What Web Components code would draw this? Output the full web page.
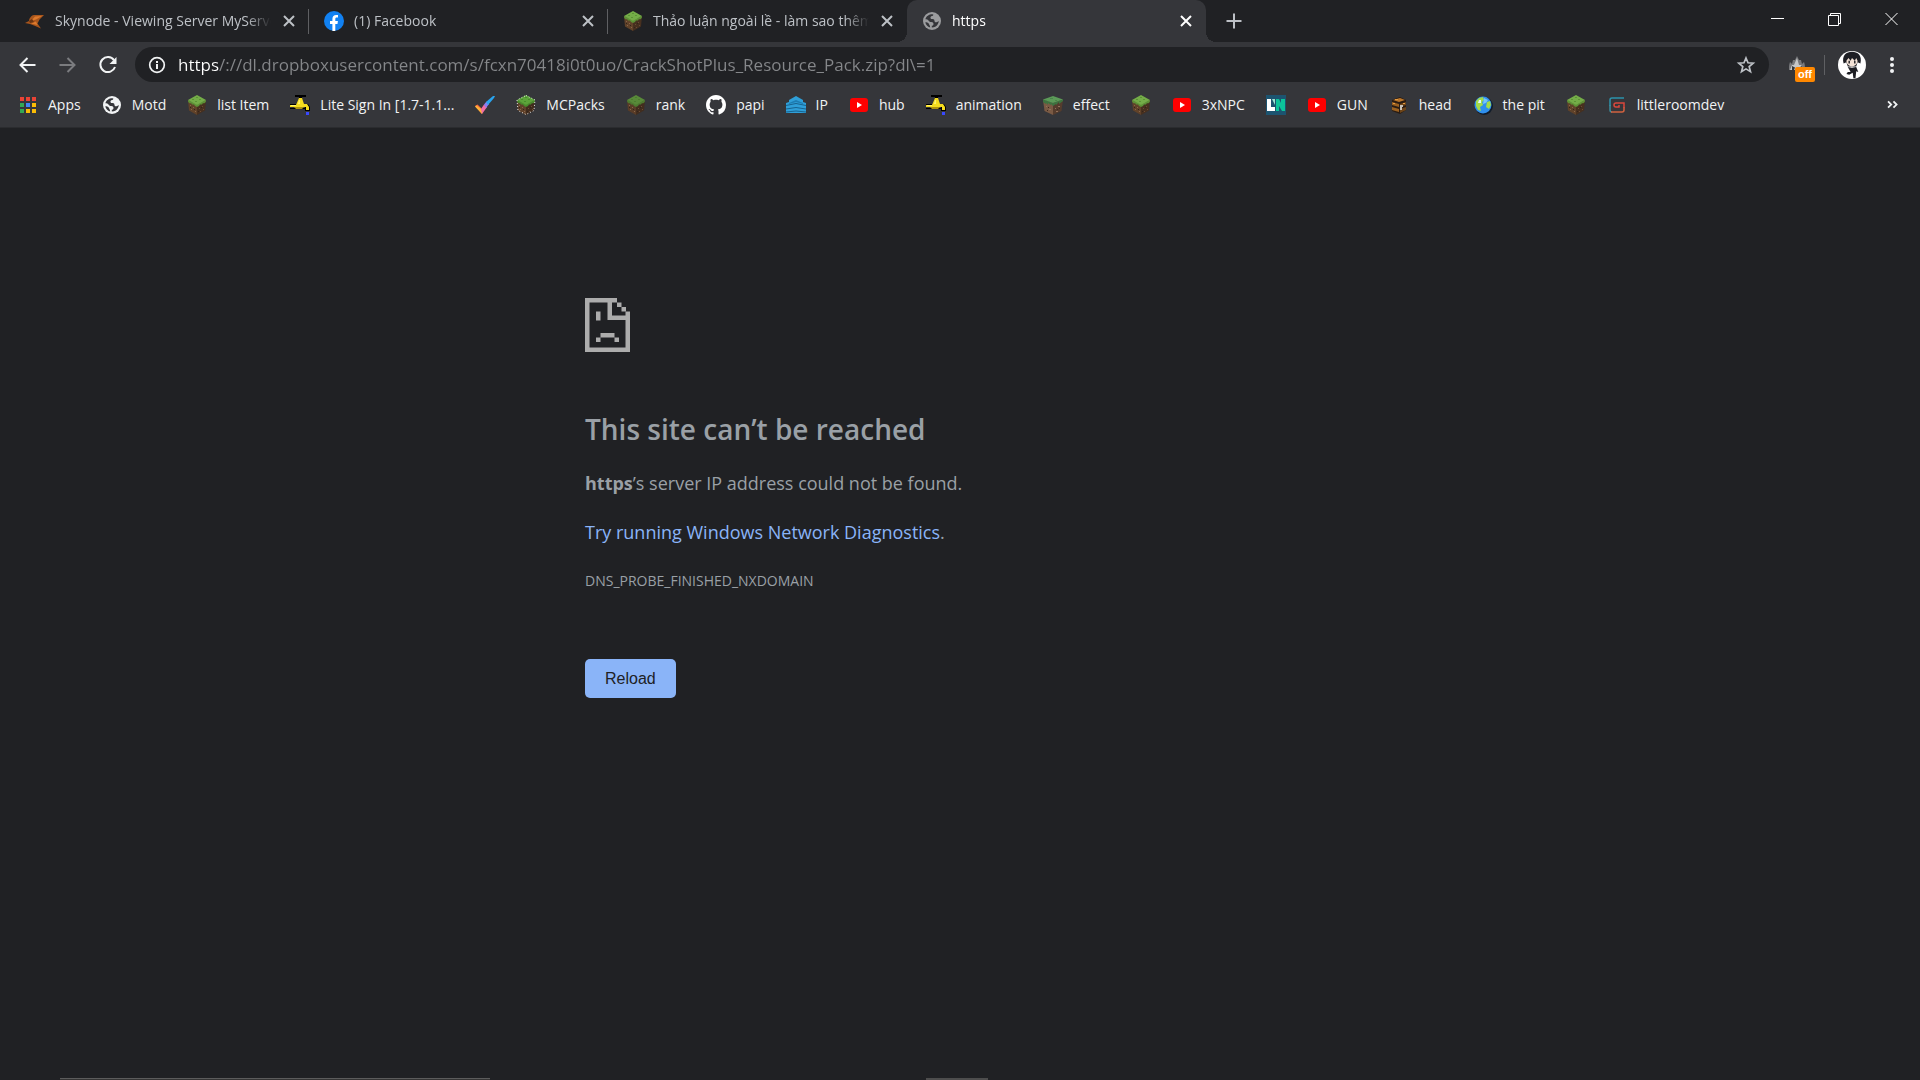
<!DOCTYPE html>
<html lang="en">
<head>
<meta charset="utf-8">
<meta name="viewport" content="width=device-width, initial-scale=1">
<title>https</title>
<style>
    body {
        margin: 0;
        min-height: 100vh;
        display: flex;
        flex-direction: column;
        background: #202124;
        color: #9aa0a6;
        font-family: "Open Sans", "Noto Sans", sans-serif;
        font-size: 14px;
        overflow-x: hidden
    }
    error-page {
        flex: 1
    }
</style>
</head>
<body>
    <tab-strip>
        <browser-tab icon="skynode">Skynode - Viewing Server MyServer</browser-tab>
        <browser-tab icon="facebook">(1) Facebook</browser-tab>
        <browser-tab icon="grass">Thảo luận ngoài lề - làm sao thêm</browser-tab>
        <browser-tab icon="globe" active>https</browser-tab>
    </tab-strip>
    <tool-bar url="https/://dl.dropboxusercontent.com/s/fcxn70418i0t0uo/CrackShotPlus_Resource_Pack.zip?dl\=1"></tool-bar>
    <bookmark-bar>
        <bookmark-item icon="apps">Apps</bookmark-item>
        <bookmark-item icon="globe">Motd</bookmark-item>
        <bookmark-item icon="grass">list Item</bookmark-item>
        <bookmark-item icon="tap">Lite Sign In [1.7-1.1...</bookmark-item>
        <bookmark-item icon="check" title="Tasks"></bookmark-item>
        <bookmark-item icon="mcpacks">MCPacks</bookmark-item>
        <bookmark-item icon="grassdark">rank</bookmark-item>
        <bookmark-item icon="github">papi</bookmark-item>
        <bookmark-item icon="tower">IP</bookmark-item>
        <bookmark-item icon="youtube">hub</bookmark-item>
        <bookmark-item icon="tap">animation</bookmark-item>
        <bookmark-item icon="block">effect</bookmark-item>
        <bookmark-item icon="grass" title="Minecraft"></bookmark-item>
        <bookmark-item icon="youtube">3xNPC</bookmark-item>
        <bookmark-item icon="ln" title="Novels"></bookmark-item>
        <bookmark-item icon="youtube">GUN</bookmark-item>
        <bookmark-item icon="crate">head</bookmark-item>
        <bookmark-item icon="earth">the pit</bookmark-item>
        <bookmark-item icon="grass" title="Minecraft"></bookmark-item>
        <bookmark-item icon="spiral">littleroomdev</bookmark-item>
    </bookmark-bar>
    <error-page>
        <h1 slot="title">This site can’t be reached</h1>
        <span slot="summary"><strong>https</strong>’s server IP address could not be found.</span>
        <a slot="suggestion" href="#diagnostics">Try running Windows Network Diagnostics</a>
        <span slot="code">DNS_PROBE_FINISHED_NXDOMAIN</span>
    </error-page>
    <desktop-edge></desktop-edge>

<script>
// isometric block, shared by all the grass icons
const cube = (top, top2, left, right, extra = '') => `
    <path fill="${left}" d="M1 5l9 4.500V20L2 15.500z"/>
    <path fill="${right}" d="M19 5l-9 4.500V20l8-4.500z"/>
    <path fill="${top2}" d="M1 5l9 4.500V12l-2-1-1-1.500-2 0-1-1.500-1 .5L1.200 7zM19 5l-9 4.500V12l2-1 1-1.500 2 0 1-1.500 1 .5L18.800 7z"/>
    <path fill="${top}" d="M10 0 19 5 10 10 1 5z"/>
    <path fill="${top2}" d="M9 2h2v1H9zM5 4h2v1H5zM12 4h2v1h-2zM8 6h2v1H8z"/>
    <path fill="#8a6547" d="M3 10h1v1H3zM6 12h1v1H6zM4 14h1v1H4zM8 16h1v1H8z"/>
    <path fill="#6b4b34" d="M12 13h1v1h-1zM15 11h1v1h-1zM16 14h1v1h-1zM13 16h1v1h-1z"/>
    <path fill="#33231a" d="M3 12h1v1H3zM7 14h1v1H7zM14 12h1v1h-1zM11 16h1v1h-1z"/>${extra}`

const ICONS = {
    apps: `
        <path fill="#ea4335" d="M2 2h4v4H2zM8 2h4v4H8zM14 2h4v4h-4z"/>
        <path fill="#34a853" d="M2 8h4v4H2zM2 14h4v4H2z"/>
        <path fill="#4285f4" d="M8 8h4v4H8z"/>
        <path fill="#fbbc05" d="M14 8h4v4h-4zM8 14h4v4H8zM14 14h4v4h-4z"/>`,
    globe: `
        <circle cx="10" cy="10" r="9" fill="currentColor"/>
        <path fill="#35363a" d="M10.500 3.200c1.500 0 .8 1.600-.4 1.900-1.400.3-1.700 1.100-1.600 1.900.1 1 1 1.100 2 1.100 1.600 0 1.900.9 2 2 .1 1.200 1 1.400 2 1.200.8-.2 1.500-.8 2.300-1.300-.1 2.200-1.300 4.300-3.100 5.500-1.200.8-2.500 1.100-3.900 1.100v-1.800c1-.2 1.700-.9 1.700-1.900 0-1.100-.8-1.900-2.200-1.900-1.700 0-2.200-.8-3-1.800-.8-.9-1.500-1.200-2.900-1C4 5.200 7 3.200 10.500 3.200z"/>
        <path fill="#35363a" d="M3.300 11.200c1.200.1 2.800.2 3.400 1.300.6 1.200 1.300 2.200 1.500 3.900-2.600-.7-4.500-2.600-4.900-5.200z"/>`,
    grass: cube('#74ad48', '#5c9136', '#604229', '#47301f'),
    grassdark: cube('#588a39', '#4c7a30', '#593c27', '#422d1e'),
    mcpacks: cube('#5ca43a', '#478b2c', '#5f412a', '#412c1d',
        '<path fill="none" stroke="#e4e4e4" stroke-width="1" stroke-dasharray="1 2" d="M10 .5l9 4.500-1 10.500-8 4-8-4L1 5z"/>'),
    block: `
        <path fill="#7a5a44" d="M0 4.500 10 8v12L1.500 16z"/>
        <path fill="#553c2d" d="M20 4.500 10 8v12l8.500-4z"/>
        <path fill="#3d7340" d="M0 4.500 10 8v3L8 9v1L5 8v2L3 8v1L0 7zM20 4.500 10 8v3l3-2v1l3-3v2l4-3z"/>
        <path fill="#5b9a58" d="M10 1 20 4.500 10 8 0 4.500z"/>
        <path fill="#4a8549" d="M7 3h3v1H7zM12 5h2v1h-2z"/>
        <path fill="#92705a" d="M3 11h1v1H3zM6 14h2v1H6zM12 13h1v1h-1zM15 11h2v1h-2zM13 16h2v1h-2z"/>
        <path fill="#3d2a20" d="M5 12h1v1H5zM4 15h1v1H4zM14 14h1v1h-1zM16 13h1v1h-1z"/>`,
    tap: `
        <path fill="#000" d="M5 0h11v2h-4v2h-3V2H5zM0 9h6v1H0zM0 13h16v1H0zM15 9h3l2 3v4h-5z"/>
        <path fill="#f5dc1e" d="M9 3h3l2 6h3l2 3v3h-3v-3H0v-2h6z"/>
        <path fill="#fff36b" d="M9 5h1v4H8zM1 10h5v1H1z"/>
        <path fill="#b09410" d="M4 12h10l-2 2H6z"/>
        <path fill="#3848ff" d="M16 17h3v3h-3z"/>`,
    check: `
        <path fill="#ff6a3e" d="M0 11l2.500-1.500L7 14v5z"/>
        <path fill="#ffb338" d="M0 11.500l1.500-1L8 15.500 7 19z"/>
        <path fill="#ef6ca5" d="M6 14l3-4.500 3 2.500-5 7z"/>
        <path fill="#8a7df0" d="M9 9.500l2.500-3L14 9l-3 4z"/>
        <path fill="#29a4ef" d="M11 7l7-6 2 0-1 2-6 7z"/>`,
    github: `<path fill="#fff" fill-rule="evenodd" transform="scale(1.250)" d="M8 0C3.580 0 0 3.580 0 8c0 3.540 2.290 6.530 5.470 7.590.4.070.55-.17.55-.38 0-.19-.01-.82-.01-1.490-2.010.37-2.530-.49-2.690-.94-.09-.23-.48-.94-.82-1.130-.28-.15-.68-.52-.01-.53.63-.01 1.080.58 1.230.82.72 1.210 1.870.87 2.330.66.07-.52.28-.87.51-1.070-1.780-.2-3.640-.89-3.640-3.950 0-.87.31-1.590.82-2.150-.08-.2-.36-1.020.08-2.120 0 0 .67-.21 2.200.82.64-.18 1.320-.27 2-.27s1.360.09 2 .27c1.530-1.040 2.200-.82 2.200-.82.44 1.100.16 1.920.08 2.120.51.56.82 1.270.82 2.150 0 3.070-1.870 3.750-3.650 3.950.29.25.54.73.54 1.480 0 1.070-.01 1.930-.01 2.200 0 .21.15.46.55.38A8.010 8.010 0 0 0 16 8c0-4.420-3.580-8-8-8z"/>`,
    tower: `
        <path fill="#2f9fd8" d="M10 1l7 4v2l3 1v10H0V8l3-1V5z"/>
        <path fill="#1d7db3" d="M10 5l7 3v1l-7-2-7 2V8z"/>
        <path fill="none" stroke="#17628f" d="M0 10.500l10-2 10 2M0 14l10-1.500L20 14M0 17l10-1 10 1"/>`,
    youtube: `
        <rect x="1" y="3" width="18" height="14" rx="3" fill="#f00"/>
        <path fill="#fff" d="M8 7l5 3-5 3z"/>`,
    ln: `
        <path fill="#1c5470" d="M0 0h20v20H0z"/>
        <path fill="#fff" d="M1 4h4v8h4v4H1z"/>
        <path fill="#0cc39a" d="M10 4h3l2 4V4h4v12h-3l-3-5v5h-3z"/>
        <path fill="#9fe3d2" d="M6 4h3v6z"/>`,
    crate: `
        <path fill="#2a1c12" d="M3 5l8-3 6 3v10l-6 4-8-3z"/>
        <path fill="#b8752a" d="M4 5l7-2 5 2-6 2z"/>
        <path fill="#9c6120" d="M3 7l7 2v3l-7-2zM3 12l7 2v3l-7-2z"/>
        <path fill="#6e4519" d="M11 9l6-2v3l-6 2zM11 14l6-2v3l-6 3z"/>
        <path fill="#c9c2b8" d="M11 10h3v2h-1v3h-2z"/>
        <path fill="#e79a3d" d="M6 4h3v1H6zM4 8h2v1H4zM14 8h2v1h-2z"/>`,
    earth: `
        <circle cx="11" cy="11" r="9" fill="#101c2b"/>
        <circle cx="10" cy="10" r="8.500" fill="#2f8fee"/>
        <path fill="#a3db4a" d="M3 6l3-3 4-1 1 3-2 2 1 3-3 2 1 4-3-1-2-4zM14 7l3-1 1 4-2 4-3-2z"/>
        <path fill="#74c4ff" d="M11 3l4 2-2 3-3 1z"/>
        <path fill="#e3f8ff" d="M6 5h2v3H5z"/>`,
    spiral: `
        <g fill="none" stroke-width="1.500">
            <path stroke="#2b93ac" d="M17 3H5Q3 3 3 5v6"/>
            <path stroke="#3c8c9c" d="M3 10v5q0 2 2 2"/>
            <path stroke="#d1623f" d="M4 17h11q2 0 2-2v-3"/>
            <path stroke="#d9473c" d="M17 13V8H9q-2 0-2 2t2 2h3v-2"/>
        </g>`,
    skynode: `
        <path fill="#a8561d" d="M19 4 9 4C6 4.500 4 8 4 10l-4 2 5 1 4 1.500 7 3-3.500-5 2-4z"/>
        <path fill="#de7a2c" d="M17 5 10 5.500l-4 4.500 5-1.500zM6 12.500l5-2 1.500 3.500z"/>
        <path fill="#6b3512" d="M4 10l3-2 2 3-4 1z"/>`,
    facebook: `
        <circle cx="10" cy="10" r="10" fill="#1181f2"/>
        <path fill="#fff" d="M8.400 20v-7H6v-3h2.400V8c0-2.700 1.500-4 3.700-4 1 0 1.900.1 1.900.1v2.400h-1.200c-1.200 0-1.500.7-1.500 1.500v2h2.600l-.4 3h-2.200v7z"/>`,
    close: '<path fill="none" stroke="currentColor" stroke-width="2" d="M5 5l10 10M15 5 5 15"/>',
    plus: '<path fill="none" stroke="currentColor" stroke-width="2" d="M10 2.500v15M2.500 10h15"/>',
    minimise: '<path stroke="#fff" d="M3 9.500h13"/>',
    restore: '<path fill="none" stroke="#fff" d="M3.500 6.500h10v10h-10zM5.500 6.500v-2h10v10h-2"/>',
    quit: '<path fill="none" stroke="#fff" d="M3.500 4l12 12M15.500 4l-12 12"/>',
    back: '<path fill="none" stroke="currentColor" stroke-width="2" d="M17.500 10h-15M9.500 3l-7 7 7 7"/>',
    forward: '<path fill="none" stroke="currentColor" stroke-width="2" d="M1.500 10h15M9.500 3l7 7-7 7"/>',
    reload: `
        <path fill="none" stroke="currentColor" stroke-width="2" d="M16 5.200A7.500 7.500 0 1 0 17 12"/>
        <path fill="currentColor" d="M18.500 2v7h-7z"/>`,
    info: `
        <circle cx="10" cy="10" r="7.300" fill="none" stroke="currentColor" stroke-width="1.700"/>
        <path fill="currentColor" d="M9 9h2v5H9zM9 6h2v2H9z"/>`,
    star: '<path fill="none" stroke="currentColor" stroke-width="1.700" d="M10 3l2 4.800 5.200.4-4 3.400 1.300 5.100-4.500-2.800-4.500 2.800 1.300-5.100-4-3.400 5.200-.4z"/>',
    flame: `
        <path fill="#77787b" d="M2 15c0-4 0-5 1-8l2 2 1-4 2 0 2-4 2 4 2 0 1 4 2-2c1 3 1 4 1 8z"/>
        <path fill="#c6c7c8" d="M3 15l2-5 2 0 3-7 2 7 2 0 3 5z"/>
        <path fill="#35363a" d="M5 11l3 1.500L7 15H5zM15 11l-3 1.500 1 2.500h2z"/>`,
    dots: '<g fill="currentColor"><circle cx="10" cy="4" r="2"/><circle cx="10" cy="10" r="2"/><circle cx="10" cy="16" r="2"/></g>',
    avatar: `
        <circle cx="10" cy="10" r="10" fill="#fff"/>
        <path fill="#1d1e24" d="M4 9C2.500 3 6 .5 10 .5S17.500 3 16 9l-2-1-1 3H7L6 8z"/>
        <path fill="#f3e2d6" d="M6 7l1.500-2L9 7l1-2 2 2 1-2 1 2c0 2-1.500 4-4 4S6 9 6 7z"/>
        <path fill="#1d1e24" d="M7.500 7h1v2h-1zM11.500 7h1v2h-1zM7 11.500l3 .5 3-.5 1.500 3.500-1.500-.5-.5 5h-1.500l-.5-4-2.500 1.500-2-.5 1-1.500h2z"/>`,
    more: '<path fill="none" stroke="currentColor" stroke-width="2" d="M4.500 6l3.500 3.500L4.500 13M10.500 6l3.500 3.500-3.500 3.500"/>',
}

class UiIcon extends HTMLElement {
    constructor() {
        super()
        this.attachShadow({mode: 'open'})
    }

    connectedCallback() {
        this.shadowRoot.innerHTML = `
            <style>
                :host {
                    display: block;
                    flex: none;
                    width: 20px;
                    height: 20px
                }
                svg {
                    display: block;
                    width: 100%;
                    height: 100%
                }
            </style>
            <svg viewBox="0 0 20 20" aria-hidden="true">${ICONS[this.getAttribute('name')]}</svg>
        `
    }
}

class BrowserTab extends HTMLElement {
    constructor() {
        super()
        this.attachShadow({mode: 'open'})
    }

    connectedCallback() {
        this.shadowRoot.innerHTML = `
            <style>
                :host {
                    position: relative;
                    box-sizing: border-box;
                    display: flex;
                    align-items: center;
                    flex: 1 1 0;
                    min-width: 0;
                    padding: 0 10px 0 15px;
                    color: #bdc1c6
                }
                :host([active]) {
                    background: #35363a;
                    border-radius: 10px 10px 0 0;
                    color: #fff
                }
                :host([active])::before, :host([active])::after {
                    content: "";
                    position: absolute;
                    bottom: 0;
                    width: 10px;
                    height: 10px
                }
                :host([active])::before {
                    right: 100%;
                    background: radial-gradient(circle at 0 0, transparent 10px, #35363a 10px)
                }
                :host([active])::after {
                    left: 100%;
                    background: radial-gradient(circle at 100% 0, transparent 10px, #35363a 10px)
                }
                :host(:not([active])) #line {
                    position: absolute;
                    right: 0;
                    top: 9px;
                    width: 1px;
                    height: 25px;
                    background: #5f6063
                }
                :host([last]) #line {
                    display: none
                }
                #icon {
                    color: #9b9c9e
                }
                #title {
                    flex: 1;
                    min-width: 0;
                    margin: 0 8px 0 10px;
                    overflow: hidden;
                    white-space: nowrap;
                    line-height: 20px;
                    -webkit-mask-image: linear-gradient(to left, transparent, #000 24px);
                    mask-image: linear-gradient(to left, transparent, #000 24px)
                }
                button {
                    padding: 0;
                    border: 0;
                    background: none;
                    color: inherit
                }
            </style>
            <ui-icon id="icon" name="${this.getAttribute('icon')}"></ui-icon>
            <span id="title"><slot></slot></span>
            <button aria-label="Close tab"><ui-icon name="close"></ui-icon></button>
            <span id="line"></span>
        `
        const next = this.nextElementSibling
        this.toggleAttribute('last', !!next && next.hasAttribute('active'))
    }
}

class TabStrip extends HTMLElement {
    constructor() {
        super()
        this.attachShadow({mode: 'open'})
        this.shadowRoot.innerHTML = `
            <style>
                :host {
                    display: flex;
                    height: 42px;
                    background: #202124
                }
                #tabs {
                    display: flex;
                    flex: 0 1 1196px;
                    min-width: 0;
                    padding-left: 10px
                }
                button {
                    display: flex;
                    align-items: center;
                    justify-content: center;
                    padding: 0;
                    border: 0;
                    background: none;
                    color: #bdc1c6
                }
                #new {
                    width: 36px;
                    margin-left: 10px
                }
                #controls {
                    display: flex;
                    margin-left: auto
                }
                #controls button {
                    width: 57px;
                    height: 37px
                }
            </style>
            <div id="tabs"><slot></slot></div>
            <button id="new" aria-label="New tab"><ui-icon name="plus"></ui-icon></button>
            <div id="controls">
                <button aria-label="Minimise"><ui-icon name="minimise"></ui-icon></button>
                <button aria-label="Restore"><ui-icon name="restore"></ui-icon></button>
                <button aria-label="Close"><ui-icon name="quit"></ui-icon></button>
            </div>
        `
    }
}

class ToolBar extends HTMLElement {
    constructor() {
        super()
        this.attachShadow({mode: 'open'})
        this.shadowRoot.innerHTML = `
            <style>
                :host {
                    display: flex;
                    align-items: center;
                    padding: 5px 8px;
                    background: #35363a;
                    color: #f1f3f4
                }
                button {
                    display: flex;
                    align-items: center;
                    justify-content: center;
                    width: 40px;
                    height: 35px;
                    padding: 0;
                    border: 0;
                    background: none;
                    color: inherit
                }
                button:disabled {
                    color: #7b7c7f
                }
                #box {
                    flex: 1;
                    display: flex;
                    align-items: center;
                    height: 35px;
                    margin: 0 8px 0 7px;
                    padding-left: 12px;
                    border-radius: 18px;
                    background: #202124
                }
                #box button {
                    width: 46px;
                    color: #bdc1c6
                }
                /* host part of the address is white, the rest grey */
                input {
                    flex: 1;
                    min-width: 0;
                    margin-left: 11px;
                    padding: 0;
                    border: 0;
                    outline: 0;
                    line-height: 24px;
                    font-family: inherit;
                    font-size: 17px;
                    color: transparent;
                    background: linear-gradient(to right, #fff 41px, #85878a 41px);
                    -webkit-background-clip: text;
                    background-clip: text
                }
                #extension {
                    position: relative
                }
                #extension span {
                    position: absolute;
                    right: 2px;
                    bottom: 0;
                    padding: 0 3px;
                    border-radius: 2px;
                    background: #ff8800;
                    color: #fff;
                    font-size: 11px;
                    font-weight: 700;
                    line-height: 15px
                }
                #rule {
                    width: 1px;
                    height: 20px;
                    margin: 0 7px;
                    background: #5f6063
                }
                #avatar ui-icon {
                    width: 28px;
                    height: 28px
                }
            </style>
            <button aria-label="Back"><ui-icon name="back"></ui-icon></button>
            <button aria-label="Forward" disabled><ui-icon name="forward"></ui-icon></button>
            <button aria-label="Reload"><ui-icon name="reload"></ui-icon></button>
            <div id="box">
                <ui-icon name="info"></ui-icon>
                <input type="text" aria-label="Address" spellcheck="false">
                <button aria-label="Bookmark this page"><ui-icon name="star"></ui-icon></button>
            </div>
            <button id="extension" aria-label="Extension, off"><ui-icon name="flame"></ui-icon><span>off</span></button>
            <span id="rule"></span>
            <button id="avatar" aria-label="Profile"><ui-icon name="avatar"></ui-icon></button>
            <button aria-label="Menu"><ui-icon name="dots"></ui-icon></button>
        `
    }

    connectedCallback() {
        this.shadowRoot.querySelector('input').value = this.getAttribute('url')
    }
}

class BookmarkItem extends HTMLElement {
    constructor() {
        super()
        this.attachShadow({mode: 'open'})
    }

    connectedCallback() {
        this.shadowRoot.innerHTML = `
            <style>
                :host {
                    display: block;
                    flex: none
                }
                a {
                    display: flex;
                    align-items: center;
                    gap: 10px;
                    color: #f1f3f4;
                    text-decoration: none;
                    line-height: 20px;
                    white-space: nowrap
                }
            </style>
            <a href="#bookmark" aria-label="${this.title || this.textContent}">
                <ui-icon name="${this.getAttribute('icon')}"></ui-icon>
                ${this.textContent ? '<span><slot></slot></span>' : ''}
            </a>
        `
    }
}

class BookmarkBar extends HTMLElement {
    constructor() {
        super()
        this.attachShadow({mode: 'open'})
        this.shadowRoot.innerHTML = `
            <style>
                :host {
                    display: flex;
                    align-items: center;
                    padding: 8px 18px 12px;
                    background: #35363a;
                    border-bottom: 1px solid #2b2c2f
                }
                #items {
                    flex: 1;
                    min-width: 0;
                    display: flex;
                    gap: 21px;
                    overflow: hidden
                }
                button {
                    padding: 0;
                    border: 0;
                    background: none;
                    color: #f1f3f4
                }
                button ui-icon {
                    width: 18px;
                    height: 18px
                }
            </style>
            <nav id="items" aria-label="Bookmarks"><slot></slot></nav>
            <button aria-label="More bookmarks"><ui-icon name="more"></ui-icon></button>
        `
    }
}

class ErrorPage extends HTMLElement {
    constructor() {
        super()
        this.attachShadow({mode: 'open'})
        this.shadowRoot.innerHTML = `
            <style>
                :host {
                    display: block;
                    padding: 170px 24px 0;
                    font-size: 18px;
                    line-height: 28px
                }
                main {
                    max-width: 750px;
                    margin: 0 auto
                }
                svg {
                    display: block;
                    width: 45px;
                    height: 54px;
                    margin-bottom: 58px
                }
                ::slotted(h1) {
                    margin: 0;
                    font-size: 28px;
                    font-weight: 600;
                    line-height: 38px
                }
                p {
                    margin: 21px 0
                }
                ::slotted(a) {
                    color: #8ab4f8;
                    text-decoration: none
                }
                #code {
                    font-size: 14px
                }
                button {
                    margin-top: 43px;
                    padding: 0 20px;
                    border: 0;
                    border-radius: 5px;
                    background: #8ab4f8;
                    color: #202124;
                    font-family: "Liberation Sans", Arial, sans-serif;
                    font-size: 16px;
                    line-height: 39px
                }
            </style>
            <main>
                <svg viewBox="0 0 90 108" fill="#acacac" aria-hidden="true">
                    <path d="M0 0h64v9H54v26h27v-8h9v81H0zM9 9v90h72V44H45V9z" fill-rule="evenodd"/>
                    <path d="M64 9h9v9h-9zM73 18h9v9h-9zM22 27h9v18h-9zM31 70h28v9H31zM22 79h9v9h-9zM59 79h9v9h-9z"/>
                </svg>
                <slot name="title"></slot>
                <p><slot name="summary"></slot></p>
                <p><slot name="suggestion"></slot>.</p>
                <p id="code"><slot name="code"></slot></p>
                <button>Reload</button>
            </main>
        `
    }
}

// sliver of the windows that sit under the bottom of the page
class DesktopEdge extends HTMLElement {
    constructor() {
        super()
        this.attachShadow({mode: 'open'})
        this.shadowRoot.innerHTML = `
            <style>
                :host {
                    display: flex;
                    gap: 436px;
                    height: 2px;
                    padding-left: 60px
                }
                #wide {
                    flex: 0 1 430px;
                    box-sizing: border-box;
                    border-top: 1px solid #5c5c5c;
                    background: #343434
                }
                #small {
                    flex: 0 0 62px;
                    background: #4d4d4d
                }
            </style>
            <span id="wide"></span>
            <span id="small"></span>
        `
    }
}

customElements.define('ui-icon', UiIcon)
customElements.define('browser-tab', BrowserTab)
customElements.define('tab-strip', TabStrip)
customElements.define('tool-bar', ToolBar)
customElements.define('bookmark-item', BookmarkItem)
customElements.define('bookmark-bar', BookmarkBar)
customElements.define('error-page', ErrorPage)
customElements.define('desktop-edge', DesktopEdge)
</script>
</body>
</html>
